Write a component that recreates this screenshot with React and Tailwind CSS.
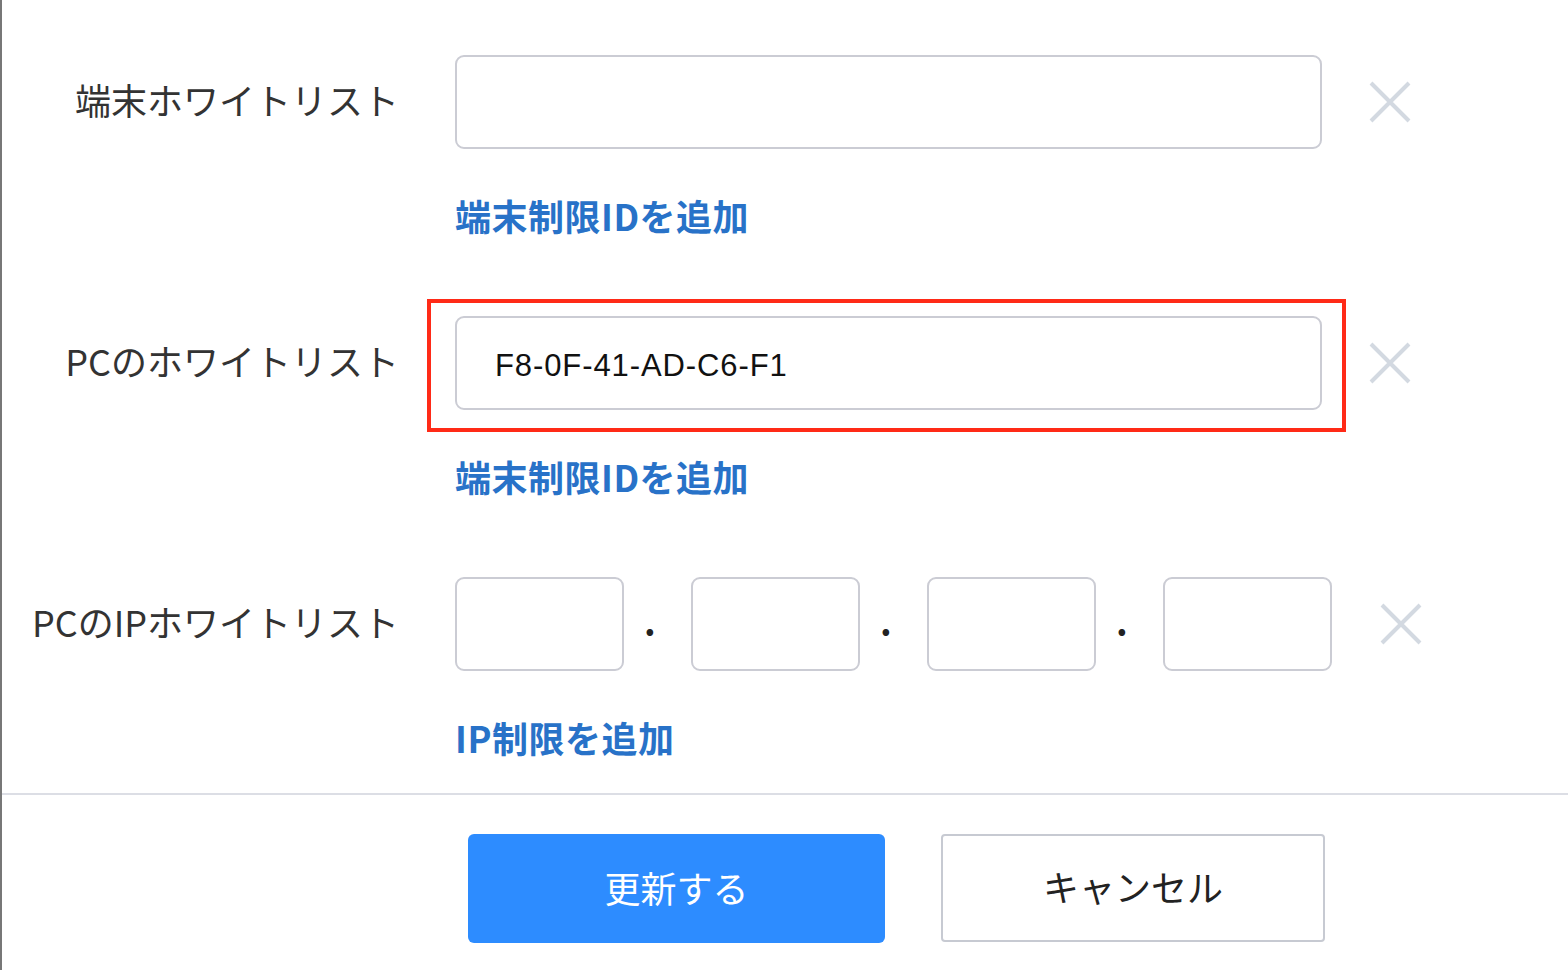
import React from 'react'

const jp = { fontFamily: '"Noto Sans CJK JP", "Noto Sans", sans-serif' }

const CloseIcon = () => (
  <svg width="44" height="44" viewBox="0 0 44 44" className="shrink-0">
    <path d="M3 3 L41 41 M41 3 L3 41" stroke="#d3d9e1" strokeWidth="4" strokeLinecap="butt" />
  </svg>
)

const Label = ({ children }) => (
  <div className="flex h-[94px] w-[397px] shrink-0 items-center justify-end pb-[7px] text-[36px] text-[#333]">
    {children}
  </div>
)

const AddLink = ({ children }) => (
  <div className="ml-[453px] mt-[44px] text-[36px] font-bold leading-[44px] tracking-[0.5px] text-[#2872c8]">
    {children}
  </div>
)

const Input = ({ className = '', value = '' }) => (
  <div
    className={`flex h-[94px] items-center rounded-[9px] border-2 border-[#cbccd4] bg-white ${className}`}
  >
    {value && (
      <span
        className="pl-[38px] pt-[6px] text-[31px] tracking-[0.9px] text-[#111]"
        style={{ fontFamily: '"Liberation Sans", Arial, sans-serif' }}
      >
        {value}
      </span>
    )}
  </div>
)

const Dot = () => (
  <div className="flex w-[67px] pl-[20px] pb-[8px] text-[36px] font-bold leading-none text-[#222]">.</div>
)

export default function App() {
  return (
    <div className="h-[970px] w-[1568px] border-l-2 border-[#777] bg-white" style={jp}>
      <div className="pt-[55px]">
        {/* 端末 */}
        <div className="flex items-center">
          <Label>端末ホワイトリスト</Label>
          <Input className="ml-[56px] w-[867px]" />
          <div className="ml-[46px]">
            <CloseIcon />
          </div>
        </div>
        <AddLink>端末制限IDを追加</AddLink>

        {/* PC */}
        <div className="mt-[79px] flex items-center">
          <Label>PCのホワイトリスト</Label>
          <div className="relative ml-[56px]">
            <Input className="w-[867px]" value="F8-0F-41-AD-C6-F1" />
            <div className="pointer-events-none absolute -left-[28px] -right-[24px] -top-[17px] -bottom-[22px] border-4 border-[#ff2a17]" />
          </div>
          <div className="ml-[46px]">
            <CloseIcon />
          </div>
        </div>
        <AddLink>端末制限IDを追加</AddLink>

        {/* IP */}
        <div className="mt-[79px] flex items-center">
          <Label>PCのIPホワイトリスト</Label>
          <div className="ml-[56px] flex items-center">
            <Input className="w-[169px]" />
            <Dot />
            <Input className="w-[169px]" />
            <Dot />
            <Input className="w-[169px]" />
            <Dot />
            <Input className="w-[169px]" />
          </div>
          <div className="ml-[47px]">
            <CloseIcon />
          </div>
        </div>
        <AddLink>IP制限を追加</AddLink>

        <div className="mt-[34px] h-[2px] bg-[#dcdee5]" />

        <div className="mt-[39px] flex gap-[56px] pl-[466px]">
          <button className="flex h-[109px] w-[417px] items-center justify-center rounded-[6px] bg-[#2d8cff] pb-[4px] text-[36px] text-white">
            更新する
          </button>
          <button className="flex h-[108px] w-[384px] items-center justify-center rounded-[4px] border-2 border-[#c7cad2] bg-white pb-[4px] text-[36px] text-[#222]">
            キャンセル
          </button>
        </div>
      </div>
    </div>
  )
}
